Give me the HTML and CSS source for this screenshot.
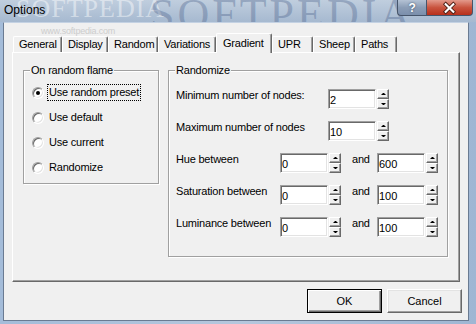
FILE: index.html
```html
<!DOCTYPE html>
<html lang="en">
<head>
    <meta charset="UTF-8">
    <title>Options</title>
    <link rel="stylesheet" href="styles.css">
</head>
<body>

<div class="window">
    <!-- Title bar -->
    <div class="titlebar">
        <span class="watermark wm-small">SOFTPEDIA</span>
        <span class="watermark wm-big">SOFTPEDIA</span>
        <span class="title">Options</span>
        <div class="caption-buttons">
            <div class="cap-btn cap-help">?</div>
            <div class="cap-btn cap-close">
                <svg width="47" height="16" viewBox="0 0 47 16">
                    <path d="M19.5 4 L27.5 12 M27.5 4 L19.5 12" stroke="#4a1d14" stroke-width="4" stroke-linecap="square"/>
                    <path d="M19.5 4 L27.5 12 M27.5 4 L19.5 12" stroke="#fff" stroke-width="2.2" stroke-linecap="square"/>
                </svg>
            </div>
        </div>
    </div>

    <div class="client">
        <span class="wm-url">www.softpedia.com</span>

        <!-- Tabs -->
        <div class="tabs">
            <div class="tab tab-general">General</div>
            <div class="tab tab-display">Display</div>
            <div class="tab tab-random">Random</div>
            <div class="tab tab-variations">Variations</div>
            <div class="tab tab-gradient selected">Gradient</div>
            <div class="tab tab-upr">UPR</div>
            <div class="tab tab-sheep">Sheep</div>
            <div class="tab tab-paths">Paths</div>
        </div>

        <div class="panel">
            <div class="group group-flame">
                <span class="group-title">On random flame</span>
                <div class="radio-list">
                    <div class="radio checked">
                        <span class="radio-box"></span>
                        <span class="radio-text focused">Use random preset</span>
                    </div>
                    <div class="radio">
                        <span class="radio-box"></span>
                        <span class="radio-text">Use default</span>
                    </div>
                    <div class="radio">
                        <span class="radio-box"></span>
                        <span class="radio-text">Use current</span>
                    </div>
                    <div class="radio">
                        <span class="radio-box"></span>
                        <span class="radio-text">Randomize</span>
                    </div>
                </div>
            </div>

            <div class="group group-randomize">
                <span class="group-title">Randomize</span>
                <div class="field-list">
                    <div class="field-row">
                        <span class="field-label wide">Minimum number of nodes:</span>
                        <div class="spin-edit">
                            <input class="edit" type="text" value="2">
                            <div class="spin"><span class="spin-btn up"></span><span class="spin-btn down"></span></div>
                        </div>
                    </div>
                    <div class="field-row">
                        <span class="field-label wide">Maximum number of nodes</span>
                        <div class="spin-edit">
                            <input class="edit" type="text" value="10">
                            <div class="spin"><span class="spin-btn up"></span><span class="spin-btn down"></span></div>
                        </div>
                    </div>
                    <div class="field-row">
                        <span class="field-label">Hue between</span>
                        <div class="spin-edit">
                            <input class="edit" type="text" value="0">
                            <div class="spin"><span class="spin-btn up"></span><span class="spin-btn down"></span></div>
                        </div>
                        <span class="and">and</span>
                        <div class="spin-edit">
                            <input class="edit" type="text" value="600">
                            <div class="spin"><span class="spin-btn up"></span><span class="spin-btn down"></span></div>
                        </div>
                    </div>
                    <div class="field-row">
                        <span class="field-label">Saturation between</span>
                        <div class="spin-edit">
                            <input class="edit" type="text" value="0">
                            <div class="spin"><span class="spin-btn up"></span><span class="spin-btn down"></span></div>
                        </div>
                        <span class="and">and</span>
                        <div class="spin-edit">
                            <input class="edit" type="text" value="100">
                            <div class="spin"><span class="spin-btn up"></span><span class="spin-btn down"></span></div>
                        </div>
                    </div>
                    <div class="field-row">
                        <span class="field-label">Luminance between</span>
                        <div class="spin-edit">
                            <input class="edit" type="text" value="0">
                            <div class="spin"><span class="spin-btn up"></span><span class="spin-btn down"></span></div>
                        </div>
                        <span class="and">and</span>
                        <div class="spin-edit">
                            <input class="edit" type="text" value="100">
                            <div class="spin"><span class="spin-btn up"></span><span class="spin-btn down"></span></div>
                        </div>
                    </div>
                </div>
            </div>
        </div>

        <!-- Dialog buttons -->
        <div class="buttons">
            <button class="btn btn-default">OK</button>
            <button class="btn">Cancel</button>
        </div>
    </div>
</div>

</body>
</html>
```

FILE: styles.css
```css
/* Base */
body {
    margin: 0;
    font-family: 'Liberation Sans', Arial, sans-serif;
    font-size: 11px;
    letter-spacing: -0.2px;
    color: #000;
    background: #a9bfda;
}

.window {
    position: relative;
    width: 476px;
    height: 324px;
    display: flex;
    flex-direction: column;
    background: linear-gradient(to right, #a4bcd9, #b5c7dd 50%, #9fb6d3);
    overflow: hidden;
}

/* Title bar */
.titlebar {
    position: relative;
    height: 22px;
    display: flex;
    align-items: flex-start;
    background: linear-gradient(to bottom, #c0cede, #a6b9d0);
    overflow: hidden;
}

.title {
    position: relative;
    z-index: 1;
    margin-left: 4px;
    font-size: 12px;
    line-height: 20px;
    letter-spacing: 0;
}

.watermark {
    position: absolute;
    font-family: 'Liberation Serif', serif;
    line-height: 22px;
    top: 0;
    pointer-events: none;
}

.wm-small {
    left: 16px;
    top: -2px;
    font-size: 26px;
    color: rgba(255, 255, 255, 0.45);
    letter-spacing: 1px;
}

.wm-big {
    left: 150px;
    top: 4px;
    font-size: 44px;
    color: rgba(70, 92, 135, 0.35);
    letter-spacing: 3px;
}

.caption-buttons {
    position: relative;
    z-index: 1;
    display: flex;
    margin-left: auto;
    margin-right: 3px;
}

.cap-btn {
    height: 16px;
    box-sizing: border-box;
    border: 1px solid #46556b;
    border-top: none;
    display: flex;
    align-items: center;
    justify-content: center;
}

.cap-help {
    width: 29px;
    border-right: none;
    border-radius: 0 0 0 4px;
    background: linear-gradient(to bottom, #b4c2d4, #8b9db6 50%, #7b8fac);
    color: #fff;
    font-weight: bold;
    font-size: 12px;
    text-shadow: 0 0 2px #33425a;
}

.cap-close {
    width: 47px;
    border-radius: 0 0 4px 0;
    background: linear-gradient(to bottom, #e39a8c, #c9543f 50%, #b8301c);
}

/* Client area */
.client {
    position: relative;
    flex: 1;
    margin: 0 7px 3px 3px;
    padding: 10px 0 0 8px;
    border: 1px solid #6a7b92;
    border-top-color: #c4d2e3;
    background: #f0f0f0;
}

.wm-url {
    position: absolute;
    left: 37px;
    top: 3px;
    font-size: 9px;
    line-height: 10px;
    color: #cdcdcd;
    pointer-events: none;
}

/* Tabs */
.tabs {
    display: flex;
    align-items: flex-end;
    height: 19px;
    margin-left: 1px;
}

.tab {
    box-sizing: border-box;
    height: 16px;
    padding: 1px 0 0 5px;
    line-height: 13px;
    border: 1px solid;
    border-color: #fff #696969 transparent #fff;
    border-bottom: none;
    border-radius: 2px 2px 0 0;
    box-shadow: inset -1px 0 0 #a0a0a0;
}

.tab.selected {
    position: relative;
    z-index: 1;
    height: 20px;
    margin-bottom: -1px;
    padding: 3px 0 0 6px;
    background: #f0f0f0;
}

.tab-general { width: 49px; }
.tab-display { width: 46px; }
.tab-random { width: 50px; }
.tab-variations { width: 58px; }
.tab-gradient { width: 56px; }
.tab-upr { width: 41px; }
.tab-sheep { width: 42px; }
.tab-paths { width: 42px; }

.panel {
    box-sizing: border-box;
    height: 230px;
    margin-right: 8px;
    padding: 17px 0 0 10px;
    display: flex;
    align-items: flex-start;
    gap: 9px;
    border: 1px solid;
    border-color: #fff #696969 #696969 #fff;
    box-shadow: inset -1px -1px 0 #a0a0a0;
}

/* Group boxes */
.group {
    box-sizing: border-box;
    display: flex;
    flex-direction: column;
    padding: 0 6px;
    border: 1px solid #a0a0a0;
    box-shadow: 1px 1px 0 #fff, inset 1px 1px 0 #fff;
    line-height: 13px;
}

.group-flame {
    width: 136px;
    height: 114px;
}

.group-randomize {
    width: 280px;
    height: 187px;
}

.group-title {
    align-self: flex-start;
    margin-top: -7px;
    padding: 0 1px;
    background: #f0f0f0;
}

/* Radio buttons */
.radio-list {
    display: flex;
    flex-direction: column;
    gap: 8px;
    margin-top: 7px;
}

.radio {
    display: flex;
    align-items: center;
    height: 17px;
}

.radio-box {
    box-sizing: border-box;
    width: 12px;
    height: 12px;
    margin: 0 3px 0 2px;
    border-radius: 50%;
    border: 1px solid;
    border-color: #a0a0a0 #fff #fff #a0a0a0;
    box-shadow: inset 1px 1px 0 #696969, inset -1px -1px 0 #e3e3e3;
    background: #fff;
    display: flex;
    align-items: center;
    justify-content: center;
}

.radio.checked .radio-box::after {
    content: "";
    width: 4px;
    height: 4px;
    border-radius: 50%;
    background: #000;
}

.radio-text {
    padding: 1px;
    border: 1px dotted transparent;
}

.radio-text.focused {
    border-color: #000;
}

/* Spin edits */
.field-list {
    display: flex;
    flex-direction: column;
    gap: 12px;
    margin-top: 12px;
}

.field-row {
    display: flex;
    align-items: flex-start;
    height: 20px;
}

.field-label {
    box-sizing: border-box;
    width: 105px;
    padding-left: 1px;
}

.field-label.wide {
    width: 153px;
}

.spin-edit {
    display: flex;
}

.edit {
    box-sizing: border-box;
    width: 48px;
    height: 20px;
    margin: 0;
    padding: 2px 1px 0;
    font-family: 'Liberation Sans', Arial, sans-serif;
    font-size: 11px;
    line-height: 13px;
    color: #000;
    background: #fff;
    border: 1px solid;
    border-color: #a0a0a0 #fff #fff #a0a0a0;
    box-shadow: inset 1px 1px 0 #696969, inset -1px -1px 0 #e3e3e3;
    outline: none;
}

.spin {
    display: flex;
    flex-direction: column;
    width: 12px;
    height: 20px;
    margin-left: 1px;
}

.spin-btn {
    box-sizing: border-box;
    height: 10px;
    display: flex;
    align-items: center;
    justify-content: center;
    background: #f0f0f0;
    border: 1px solid;
    border-color: #fff #696969 #696969 #fff;
    box-shadow: inset -1px -1px 0 #a0a0a0;
}

.spin-btn::before {
    content: "";
    width: 1px;
    height: 0;
    border-left: 2px solid transparent;
    border-right: 2px solid transparent;
}

.spin-btn.up::before {
    border-bottom: 2px solid #000;
}

.spin-btn.down::before {
    border-top: 2px solid #000;
}

.and {
    margin: 0 7px 0 11px;
    width: 18px;
}

/* Dialog buttons */
.buttons {
    display: flex;
    justify-content: flex-end;
    gap: 5px;
    margin: 7px 6px 0 0;
}

.btn {
    box-sizing: border-box;
    width: 75px;
    height: 24px;
    padding: 0;
    font-family: 'Liberation Sans', Arial, sans-serif;
    font-size: 11px;
    color: #000;
    background: #f0f0f0;
    border: 1px solid;
    border-color: #fff #696969 #696969 #fff;
    box-shadow: inset -1px -1px 0 #a0a0a0, inset 1px 1px 0 #e3e3e3;
}

.btn-default {
    border-color: #000;
    box-shadow: inset 1px 1px 0 #fff, inset -1px -1px 0 #696969, inset -2px -2px 0 #a0a0a0;
}
```
